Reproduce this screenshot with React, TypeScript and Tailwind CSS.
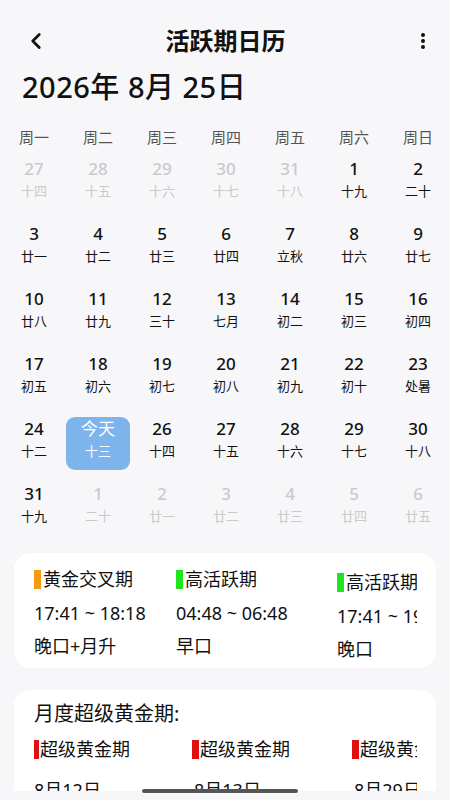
import { ChevronLeft } from "lucide-react";

type Day = { n: number; lunar: string; faded?: boolean; today?: boolean };

const weekdays = ["周一", "周二", "周三", "周四", "周五", "周六", "周日"];

const days: Day[] = [
  { n: 27, lunar: "十四", faded: true },
  { n: 28, lunar: "十五", faded: true },
  { n: 29, lunar: "十六", faded: true },
  { n: 30, lunar: "十七", faded: true },
  { n: 31, lunar: "十八", faded: true },
  { n: 1, lunar: "十九" },
  { n: 2, lunar: "二十" },
  { n: 3, lunar: "廿一" },
  { n: 4, lunar: "廿二" },
  { n: 5, lunar: "廿三" },
  { n: 6, lunar: "廿四" },
  { n: 7, lunar: "立秋" },
  { n: 8, lunar: "廿六" },
  { n: 9, lunar: "廿七" },
  { n: 10, lunar: "廿八" },
  { n: 11, lunar: "廿九" },
  { n: 12, lunar: "三十" },
  { n: 13, lunar: "七月" },
  { n: 14, lunar: "初二" },
  { n: 15, lunar: "初三" },
  { n: 16, lunar: "初四" },
  { n: 17, lunar: "初五" },
  { n: 18, lunar: "初六" },
  { n: 19, lunar: "初七" },
  { n: 20, lunar: "初八" },
  { n: 21, lunar: "初九" },
  { n: 22, lunar: "初十" },
  { n: 23, lunar: "处暑" },
  { n: 24, lunar: "十二" },
  { n: 25, lunar: "十三", today: true },
  { n: 26, lunar: "十四" },
  { n: 27, lunar: "十五" },
  { n: 28, lunar: "十六" },
  { n: 29, lunar: "十七" },
  { n: 30, lunar: "十八" },
  { n: 31, lunar: "十九" },
  { n: 1, lunar: "二十", faded: true },
  { n: 2, lunar: "廿一", faded: true },
  { n: 3, lunar: "廿二", faded: true },
  { n: 4, lunar: "廿三", faded: true },
  { n: 5, lunar: "廿四", faded: true },
  { n: 6, lunar: "廿五", faded: true },
];

const periods = [
  { name: "黄金交叉期", time: "17:41 ~ 18:18", note: "晚口+月升", color: "bg-[#f39c12]", w: "w-[142px]" },
  { name: "高活跃期", time: "04:48 ~ 06:48", note: "早口", color: "bg-[#1ee51e]", w: "w-[161px]" },
  { name: "高活跃期", time: "17:41 ~ 19:41", note: "晚口", color: "bg-[#1ee51e]", w: "w-[160px] pt-[3px]" },
];

const golden = [
  { name: "超级黄金期", date: "8月12日" },
  { name: "超级黄金期", date: "8月13日" },
  { name: "超级黄金期", date: "8月29日" },
];

function DayCell({ d }: { d: Day }) {
  if (d.today) {
    return (
      <div className="flex h-[65px] justify-center">
        <div className="flex h-[53px] w-[64px] flex-col items-center rounded-[9px] bg-[#7db4ec] pt-[1px] text-white">
          <span className="text-[17px] leading-[22px]">今天</span>
          <span className="text-[13px] leading-[22px]">{d.lunar}</span>
        </div>
      </div>
    );
  }
  return (
    <div className={"flex h-[65px] flex-col items-center pt-[1px] " + (d.faded ? "text-[#cacaca]" : "text-[#111]")}>
      <span className="text-[17px] font-medium leading-[22px]">{d.n}</span>
      <span className="text-[13px] leading-[22px]">{d.lunar}</span>
    </div>
  );
}

export default function App() {
  return (
    <div
      className="relative h-[800px] w-[450px] overflow-hidden bg-[#f7f7f9] text-[#111]"
      style={{ fontFamily: '"Noto Sans", "Noto Sans CJK SC", sans-serif' }}
    >
      <div className="h-[791px] overflow-hidden">
        {/* header */}
        <div className="mt-[19px] flex h-[44px] items-center justify-between px-[24px]">
          <ChevronLeft size={26} strokeWidth={2.6} className="-ml-[1px]" />
          <h1 className="text-[24px] font-semibold">活跃期日历</h1>
          <div className="flex w-[24px] flex-col items-end gap-[2px] pr-[1px]">
            <span className="h-[4px] w-[4px] rounded-full bg-[#111]" />
            <span className="h-[4px] w-[4px] rounded-full bg-[#111]" />
            <span className="h-[4px] w-[4px] rounded-full bg-[#111]" />
          </div>
        </div>

        <div className="mt-[6px] flex h-[36px] items-center px-[22px] text-[29px] font-medium tracking-[0.5px]">
          2026年 8月 25日
        </div>

        {/* weekdays */}
        <div className="mt-[22px] grid h-[20px] grid-cols-7 pl-[2px] text-[15px] leading-[20px] text-[#555]">
          {weekdays.map((w) => (
            <div key={w} className="text-center">{w}</div>
          ))}
        </div>

        {/* days */}
        <div className="mt-[10px] grid grid-cols-7 pl-[2px]">
          {days.map((d, i) => (
            <DayCell key={i} d={d} />
          ))}
        </div>

        {/* today periods */}
        <div className="mx-[14px] mt-[6px] h-[115px] rounded-[16px] bg-white pl-[20px] pr-[19px] pt-[16px] shadow-[0_0_2px_rgba(0,0,0,0.04)]">
          <div className="flex overflow-hidden">
            {periods.map((p, i) => (
              <div key={i} className={"flex shrink-0 flex-col " + p.w}>
                <div className="flex h-[20px] items-center text-[18px]">
                  <span className={"mr-[2px] h-[19px] w-[7px] " + p.color} />
                  <span className="whitespace-nowrap leading-[20px]">{p.name}</span>
                </div>
                <div className="mt-[13px] whitespace-nowrap text-[18px] leading-[22px]">{p.time}</div>
                <div className="mt-[11px] whitespace-nowrap text-[18px] leading-[22px]">{p.note}</div>
              </div>
            ))}
          </div>
        </div>

        {/* monthly golden */}
        <div className="mx-[14px] mt-[22px] h-[200px] rounded-[16px] bg-white pl-[20px] pr-[19px] pt-[10px]">
          <div className="text-[20px] leading-[28px]">月度超级黄金期:</div>
          <div className="mt-[11px] flex overflow-hidden">
            {golden.map((g, i) => (
              <div key={i} className="flex w-[160px] shrink-0 flex-col">
                <div className="-ml-[2px] flex h-[20px] items-center text-[18px]">
                  <span className="mr-[1px] h-[19px] w-[7px] bg-[#e01010]" />
                  <span className="whitespace-nowrap leading-[20px]">{g.name}</span>
                </div>
                <div className="mt-[20px] whitespace-nowrap text-[18px] leading-[22px]">{g.date}</div>
              </div>
            ))}
          </div>
        </div>
      </div>

      {/* home indicator */}
      <div className="absolute bottom-[7px] left-[142px] h-[4px] w-[156px] rounded-full bg-[#555]" />
    </div>
  );
}
